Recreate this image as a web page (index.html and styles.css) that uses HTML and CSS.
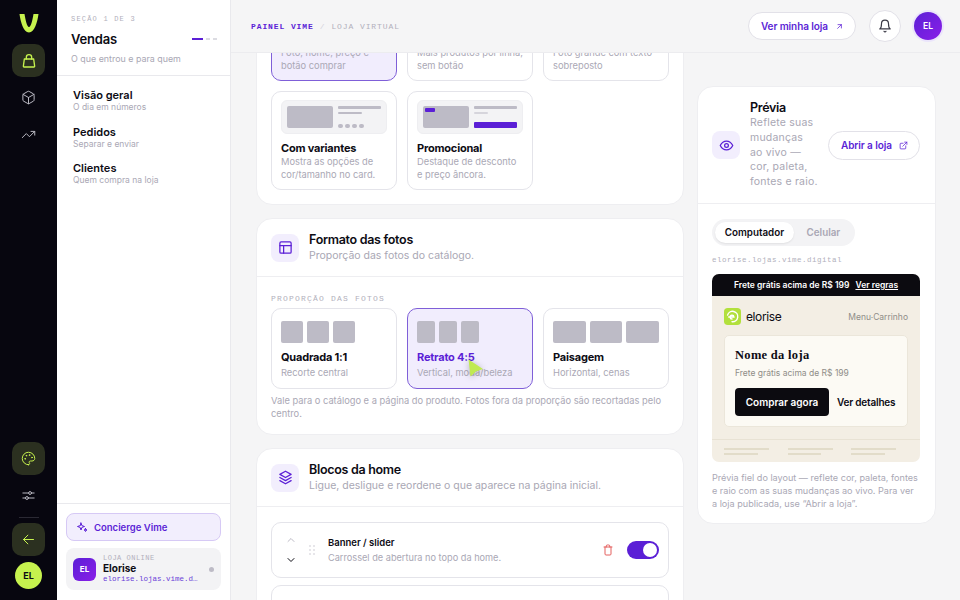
FILE: index.html
```html
<!DOCTYPE html>
<html lang="pt-BR">
<head>
    <meta charset="UTF-8">
    <title>Painel Vime - Loja virtual</title>
    <link rel="stylesheet" href="styles.css">
</head>
<body>
    <div class="app">
        <nav class="rail">
            <svg class="rail-logo" viewBox="0 0 20 19"><path d="M.5 0h5c1 6 2.500 13 4.500 13s3.500-7 4.500-13h5c-1 8-4 18.500-9.500 18.500S1.500 8 .5 0z"/></svg>
            <a class="rail-btn active"><svg class="icon bag" viewBox="0 0 24 24"><path d="M5 9h14l1.500 11a1 1 0 0 1-1 1h-15a1 1 0 0 1-1-1z"/><path d="M8 9V6.500a4 4 0 0 1 8 0V9"/></svg></a>
            <a class="rail-btn"><svg class="icon" viewBox="0 0 24 24"><path d="M21 8a2 2 0 0 0-1-1.730l-7-4a2 2 0 0 0-2 0l-7 4A2 2 0 0 0 3 8v8a2 2 0 0 0 1 1.730l7 4a2 2 0 0 0 2 0l7-4A2 2 0 0 0 21 16Z"/><path d="m3.300 7 8.700 5 8.700-5"/><path d="M12 22V12"/></svg></a>
            <a class="rail-btn"><svg class="icon" viewBox="0 0 24 24"><path d="M22 7l-8.500 8.500-5-5L2 17"/><path d="M16 7h6v6"/></svg></a>
            <div class="rail-space"></div>
            <a class="rail-btn active"><svg class="icon" viewBox="0 0 24 24"><path d="M12 22a10 10 0 1 1 10-10c0 2.500-2 4-4.500 4H15a2 2 0 0 0-1.500 3.300c.4.5.5 1 .2 1.600-.3.7-1 1.100-1.700 1.100z"/><circle cx="13.500" cy="6.500" r=".6"/><circle cx="17.500" cy="10.500" r=".6"/><circle cx="8.500" cy="7.500" r=".6"/><circle cx="6.500" cy="12.500" r=".6"/></svg></a>
            <a class="rail-btn"><svg class="icon" viewBox="0 0 24 24"><path d="M3 8h9M17 8h4M3 16h4M12 16h9"/><circle cx="14.500" cy="8" r="2.300"/><circle cx="9.500" cy="16" r="2.300"/></svg></a>
            <div class="rail-line"></div>
            <a class="rail-btn active"><svg class="icon" viewBox="0 0 24 24"><path d="M20 12H4"/><path d="M11 19l-7-7 7-7"/></svg></a>
            <div class="rail-avatar">EL</div>
        </nav>

        <aside class="side">
            <div class="side-head">
                <div class="mono-label">SEÇÃO 1 DE 3</div>
                <div class="side-title-row">
                    <h2>Vendas</h2>
                    <div class="steps"><span class="on"></span><span></span><span></span></div>
                </div>
                <p>O que entrou e para quem</p>
            </div>
            <ul class="side-menu">
                <li><b>Visão geral</b><small>O dia em números</small></li>
                <li><b>Pedidos</b><small>Separar e enviar</small></li>
                <li><b>Clientes</b><small>Quem compra na loja</small></li>
            </ul>
            <div class="side-foot">
                <button class="concierge">
                    <svg class="icon" viewBox="0 0 24 24"><path d="M10 4l1.800 5.200L17 11l-5.200 1.800L10 18l-1.800-5.200L3 11l5.200-1.800z"/><path d="M19 15l.8 2.200L22 18l-2.200.8L19 21l-.8-2.200L16 18l2.200-.8z"/></svg>
                    Concierge Vime
                </button>
                <div class="store">
                    <div class="store-logo">EL</div>
                    <div class="store-info">
                        <span class="store-kind">LOJA ONLINE</span>
                        <b>Elorise</b>
                        <span class="store-url">elorise.lojas.vime.digital</span>
                    </div>
                    <i class="store-dot"></i>
                </div>
            </div>
        </aside>

        <div class="main">
            <header class="topbar">
                <div class="crumb"><b>PAINEL VIME</b><span class="sep">/</span><span>LOJA VIRTUAL</span></div>
                <div class="top-actions">
                    <a class="pill-btn">Ver minha loja <svg class="icon" viewBox="0 0 24 24"><path d="M7 17 17 7"/><path d="M8 7h9v9"/></svg></a>
                    <a class="bell"><svg class="icon" viewBox="0 0 24 24"><path d="M6 8a6 6 0 0 1 12 0c0 7 3 9 3 9H3s3-2 3-9"/><path d="M10.300 21a1.940 1.940 0 0 0 3.400 0"/></svg></a>
                    <div class="top-avatar">EL</div>
                </div>
            </header>

            <div class="content">
                <div class="col-left">
                    <section class="card card-cut">
                        <div class="tiles">
                            <div class="tile selected"><p>Foto, nome, preço e botão comprar</p></div>
                            <div class="tile"><p>Mais produtos por linha, sem botão</p></div>
                            <div class="tile"><p>Foto grande com texto sobreposto</p></div>
                            <div class="tile">
                                <div class="mini">
                                    <div class="mini-photo"></div>
                                    <div class="mini-body">
                                        <i class="bar"></i><i class="bar short"></i>
                                        <div class="mini-dots"><i></i><i></i><i></i><i></i></div>
                                    </div>
                                </div>
                                <h4>Com variantes</h4>
                                <p>Mostra as opções de cor/tamanho no card.</p>
                            </div>
                            <div class="tile">
                                <div class="mini">
                                    <div class="mini-photo"><i class="mini-tag"></i></div>
                                    <div class="mini-body">
                                        <i class="bar"></i><i class="bar tiny"></i>
                                        <i class="mini-cta"></i>
                                    </div>
                                </div>
                                <h4>Promocional</h4>
                                <p>Destaque de desconto e preço âncora.</p>
                            </div>
                        </div>
                    </section>

                    <section class="card">
                        <div class="card-head">
                            <div class="head-icon"><svg class="icon" viewBox="0 0 24 24"><rect x="3" y="3" width="18" height="18" rx="2"/><path d="M3 9h18"/><path d="M9 21V9"/></svg></div>
                            <div class="head-text">
                                <h3>Formato das fotos</h3>
                                <p>Proporção das fotos do catálogo.</p>
                            </div>
                        </div>
                        <div class="card-body">
                            <div class="mono-label field-label">PROPORÇÃO DAS FOTOS</div>
                            <div class="tiles">
                                <div class="tile ratio">
                                    <div class="shots square"><i></i><i></i><i></i></div>
                                    <h4>Quadrada 1:1</h4>
                                    <p>Recorte central</p>
                                </div>
                                <div class="tile ratio selected">
                                    <div class="shots portrait"><i></i><i></i><i></i></div>
                                    <h4>Retrato 4:5</h4>
                                    <p>Vertical, moda/beleza</p>
                                    <svg class="cursor" viewBox="0 0 16 18"><path d="M.5.5 15 10l-7 2.500-5.500 5z"/></svg>
                                </div>
                                <div class="tile ratio">
                                    <div class="shots wide"><i></i><i></i><i></i></div>
                                    <h4>Paisagem</h4>
                                    <p>Horizontal, cenas</p>
                                </div>
                            </div>
                            <p class="note">Vale para o catálogo e a página do produto. Fotos fora da proporção são recortadas pelo centro.</p>
                        </div>
                    </section>

                    <section class="card">
                        <div class="card-head">
                            <div class="head-icon"><svg class="icon" viewBox="0 0 24 24"><path d="M12 2 3 7l9 5 9-5z"/><path d="M3 12l9 5 9-5"/><path d="M3 17l9 5 9-5"/></svg></div>
                            <div class="head-text">
                                <h3>Blocos da home</h3>
                                <p>Ligue, desligue e reordene o que aparece na página inicial.</p>
                            </div>
                        </div>
                        <div class="card-body blocks">
                            <div class="block">
                                <div class="arrows">
                                    <svg class="icon up" viewBox="0 0 24 24"><path d="M6 15l6-6 6 6"/></svg>
                                    <svg class="icon" viewBox="0 0 24 24"><path d="M6 9l6 6 6-6"/></svg>
                                </div>
                                <svg class="grip" viewBox="0 0 6 10"><circle cx="1" cy="1" r=".7"/><circle cx="5" cy="1" r=".7"/><circle cx="1" cy="5" r=".7"/><circle cx="5" cy="5" r=".7"/><circle cx="1" cy="9" r=".7"/><circle cx="5" cy="9" r=".7"/></svg>
                                <div class="block-text">
                                    <b>Banner / slider</b>
                                    <span>Carrossel de abertura no topo da home.</span>
                                </div>
                                <svg class="icon trash" viewBox="0 0 24 24"><path d="M4 6h16"/><path d="M18 6v14a2 2 0 0 1-2 2H8a2 2 0 0 1-2-2V6"/><path d="M8.500 6V4a2 2 0 0 1 2-2h3a2 2 0 0 1 2 2v2"/></svg>
                                <div class="toggle"><i></i></div>
                            </div>
                            <div class="block empty"></div>
                        </div>
                    </section>
                </div>

                <div class="col-right">
                    <section class="card preview-card">
                        <div class="preview-head">
                            <div class="head-icon"><svg class="icon" viewBox="0 0 24 24"><path d="M2 12s3.500-7 10-7 10 7 10 7-3.500 7-10 7-10-7-10-7Z"/><circle cx="12" cy="12" r="3"/></svg></div>
                            <div class="preview-text">
                                <h3>Prévia</h3>
                                <p>Reflete suas mudanças ao vivo — cor, paleta, fontes e raio.</p>
                            </div>
                            <a class="pill-btn open-btn">Abrir a loja <svg class="icon" viewBox="0 0 24 24"><path d="M15 3h6v6"/><path d="M10 14 21 3"/><path d="M18 13v6a2 2 0 0 1-2 2H5a2 2 0 0 1-2-2V8a2 2 0 0 1 2-2h6"/></svg></a>
                        </div>
                        <div class="preview-body">
                            <div class="tabs"><span class="tab on">Computador</span><span class="tab">Celular</span></div>
                            <div class="mono-label url">elorise.lojas.vime.digital</div>
                            <div class="shop">
                                <div class="shop-promo"><b>Frete grátis acima de R$ 199</b><u>Ver regras</u></div>
                                <div class="shop-main">
                                    <div class="shop-nav">
                                        <div class="shop-brand">
                                            <svg class="shop-logo" viewBox="0 0 18 18"><rect width="18" height="18" rx="4"/><path d="M5 9.500h5.500a2 2 0 1 0-2 2.200"/><path d="M3.800 7.500A5.500 5.500 0 1 1 8.500 14.500"/></svg>
                                            <span>elorise</span>
                                        </div>
                                        <span class="shop-links">Menu·Carrinho</span>
                                    </div>
                                    <div class="shop-hero">
                                        <h5>Nome da loja</h5>
                                        <p>Frete grátis acima de R$ 199</p>
                                        <div class="shop-actions">
                                            <a class="shop-buy">Comprar agora</a>
                                            <a class="shop-more">Ver detalhes</a>
                                        </div>
                                    </div>
                                </div>
                                <div class="shop-foot">
                                    <div><i></i><i></i></div>
                                    <div><i></i><i></i></div>
                                    <div><i></i><i></i></div>
                                </div>
                            </div>
                            <p class="note">Prévia fiel do layout — reflete cor, paleta, fontes e raio com as suas mudanças ao vivo. Para ver a loja publicada, use “Abrir a loja”.</p>
                        </div>
                    </section>
                </div>
            </div>
        </div>
    </div>
</body>
</html>
```

FILE: styles.css
```css
* {
    box-sizing: border-box;
}

body {
    margin: 0;
    font-family: Inter, "Noto Sans", sans-serif;
    color: #0d0c14;
    background: #f5f5f6;
}

h2, h3, h4, h5, p, ul {
    margin: 0;
    padding: 0;
}

.icon {
    width: 15px;
    height: 15px;
    fill: none;
    stroke: currentColor;
    stroke-width: 2;
    stroke-linecap: round;
    stroke-linejoin: round;
    flex-shrink: 0;
}

.app {
    display: flex;
    width: 960px;
    height: 600px;
    overflow: hidden;
}

.mono-label {
    font-family: "Liberation Mono", monospace;
    font-size: 8px;
    letter-spacing: 1.2px;
    color: #b2b0bc;
}

/* rail */
.rail {
    width: 57px;
    background: #07060f;
    display: flex;
    flex-direction: column;
    align-items: center;
    gap: 4px;
    padding: 14px 0 11px;
    flex-shrink: 0;
}

.rail-logo {
    width: 20px;
    height: 19px;
    margin-bottom: 7px;
    fill: #c6f24e;
}

.rail-btn {
    width: 33px;
    height: 33px;
    border-radius: 10px;
    display: flex;
    align-items: center;
    justify-content: center;
    color: #b9b8c2;
}

.rail-btn .icon {
    stroke-width: 1.600;
}

.rail-btn .bag {
    width: 16px;
    height: 16px;
    stroke-width: 2;
}

.rail-btn.active {
    background: #2b3020;
    color: #c6f24e;
}

.rail-space {
    flex: 1;
}

.rail-line {
    width: 20px;
    height: 1px;
    background: #2a2933;
    margin: 1px 0;
}

.rail-avatar {
    width: 27px;
    height: 27px;
    margin-top: 2px;
    border-radius: 50%;
    background: #c6f24e;
    font-size: 9px;
    font-weight: 700;
    display: flex;
    align-items: center;
    justify-content: center;
}

/* side panel */
.side {
    width: 174px;
    background: #fff;
    border-right: 1px solid #e9e9ed;
    display: flex;
    flex-direction: column;
    flex-shrink: 0;
}

.side-head {
    padding: 15px 13px 11px 14px;
    height: 76px;
    border-bottom: 1px solid #e9e9ed;
}

.side-head .mono-label {
    font-size: 7px;
    line-height: 9px;
}

.side-title-row {
    display: flex;
    align-items: center;
    justify-content: space-between;
    margin-top: 7px;
}

.side-title-row h2 {
    font-size: 13px;
    font-weight: 600;
    letter-spacing: -.2px;
    line-height: 16px;
}

.steps {
    display: flex;
    gap: 3px;
}

.steps span {
    width: 4px;
    height: 2px;
    background: #dcdce2;
}

.steps span.on {
    width: 11px;
    background: #5b1fd6;
}

.side-head p {
    margin-top: 6px;
    font-size: 8.900px;
    line-height: 11px;
    color: #a9a7b4;
}

.side-menu {
    list-style: none;
    padding: 13px 16px;
}

.side-menu li {
    height: 36.500px;
}

.side-menu b {
    display: block;
    font-size: 11px;
    font-weight: 600;
    line-height: 13px;
}

.side-menu small {
    display: block;
    font-size: 8.500px;
    line-height: 10px;
    color: #aaa8b5;
}

.side-foot {
    margin-top: auto;
    border-top: 1px solid #e9e9ed;
    padding: 9px 9px 10px;
    display: flex;
    flex-direction: column;
    gap: 7px;
}

.concierge {
    height: 28px;
    border: 1px solid #d6c9f5;
    border-radius: 8px;
    background: #f2eefd;
    color: #5b1fd6;
    font-family: inherit;
    font-size: 9.500px;
    font-weight: 600;
    display: flex;
    align-items: center;
    gap: 6px;
    padding: 0 9px;
}

.concierge .icon {
    width: 12px;
    height: 12px;
}

.store {
    height: 42px;
    border-radius: 8px;
    background: #f3f3f5;
    display: flex;
    align-items: center;
    padding: 0 7px;
    gap: 7px;
}

.store-logo {
    width: 23px;
    height: 23px;
    border-radius: 6px;
    background: linear-gradient(135deg, #5b1fd6, #8a1fe8);
    color: #fff;
    font-size: 8px;
    font-weight: 700;
    display: flex;
    align-items: center;
    justify-content: center;
    flex-shrink: 0;
}

.store-info {
    flex: 1;
    min-width: 0;
    display: flex;
    flex-direction: column;
}

.store-kind {
    font-family: "Liberation Mono", monospace;
    font-size: 7px;
    line-height: 8px;
    letter-spacing: .5px;
    color: #b2b0bc;
}

.store-info b {
    font-size: 10px;
    font-weight: 700;
    line-height: 12px;
}

.store-url {
    font-family: "Liberation Mono", monospace;
    font-size: 7.500px;
    line-height: 10px;
    color: #6a3fd8;
    white-space: nowrap;
    overflow: hidden;
    text-overflow: ellipsis;
}

.store-dot {
    width: 5px;
    height: 5px;
    border-radius: 50%;
    background: #bdbbc6;
    flex-shrink: 0;
}

/* top bar */
.main {
    flex: 1;
    min-width: 0;
    display: flex;
    flex-direction: column;
}

.topbar {
    height: 53px;
    flex-shrink: 0;
    background: #f5f5f6;
    border-bottom: 1px solid #ececef;
    display: flex;
    align-items: center;
    justify-content: space-between;
    padding: 0 18px 0 20px;
    position: relative;
    z-index: 2;
}

.crumb {
    font-family: "Liberation Mono", monospace;
    font-size: 8px;
    letter-spacing: .9px;
    color: #b2b0bc;
    display: flex;
    gap: 6px;
}

.crumb b {
    color: #5b1fd6;
}

.crumb .sep {
    color: #d4d3da;
}

.top-actions {
    display: flex;
    align-items: center;
    gap: 13px;
}

.pill-btn {
    height: 28px;
    padding: 0 13px;
    border: 1px solid #e2e1e8;
    border-radius: 15px;
    background: #fff;
    color: #5b1fd6;
    font-size: 10px;
    font-weight: 600;
    letter-spacing: -.1px;
    display: flex;
    align-items: center;
    gap: 7px;
    white-space: nowrap;
}

.pill-btn .icon {
    width: 9px;
    height: 9px;
}

.top-actions .pill-btn {
    width: 108px;
    padding: 0 13px 0 12px;
    justify-content: space-between;
}

.bell {
    width: 32px;
    height: 32px;
    border: 1px solid #e2e1e8;
    border-radius: 50%;
    background: #fff;
    color: #3a3945;
    display: flex;
    align-items: center;
    justify-content: center;
}

.bell .icon {
    width: 14px;
    height: 14px;
}

.top-avatar {
    width: 28px;
    height: 28px;
    border-radius: 50%;
    background: linear-gradient(135deg, #5b1fd6, #8a1fe8);
    box-shadow: 0 0 0 2px #ebe5fb;
    color: #fff;
    font-size: 8.500px;
    font-weight: 600;
    display: flex;
    align-items: center;
    justify-content: center;
}

/* content */
.content {
    flex: 1;
    min-height: 0;
    overflow: hidden;
    display: flex;
    gap: 13px;
    padding-left: 25px;
}

.col-left {
    width: 428px;
    flex-shrink: 0;
    display: flex;
    flex-direction: column;
    gap: 13px;
}

.col-right {
    width: 239px;
    flex-shrink: 0;
    padding-top: 33px;
}

.card {
    background: #fff;
    border: 1px solid #eeeef1;
    border-radius: 16px;
    flex-shrink: 0;
}

.card-cut {
    margin-top: -32px;
    padding: 15px 14px 14px;
}

.card-head {
    height: 58px;
    border-bottom: 1px solid #eeeef1;
    display: flex;
    align-items: center;
    gap: 10px;
    padding: 0 14px;
}

.head-icon {
    width: 28px;
    height: 28px;
    border-radius: 8px;
    background: #f2eefd;
    color: #5b1fd6;
    display: flex;
    align-items: center;
    justify-content: center;
    flex-shrink: 0;
}

.head-text h3, .preview-text h3 {
    font-size: 12.500px;
    font-weight: 600;
    letter-spacing: -.3px;
    line-height: 16px;
}

.head-text p {
    font-size: 10.500px;
    line-height: 15px;
    color: #a9a7b4;
}

.card-body {
    padding: 17px 14px 14px;
}

.field-label {
    line-height: 10px;
    margin-bottom: 4px;
}

.tiles {
    display: grid;
    grid-template-columns: repeat(3, 1fr);
    gap: 10px;
}

.tile {
    border: 1px solid #e4e4ea;
    border-radius: 10px;
    background: #fff;
    padding: 8px 9px;
    position: relative;
}

.tile.selected {
    background: #f1edfd;
    border-color: #7f5fd8;
}

.tile h4 {
    font-size: 11px;
    font-weight: 700;
    letter-spacing: -.2px;
    line-height: 14px;
    margin-top: 7px;
}

.tile p {
    font-size: 9.300px;
    line-height: 13px;
    color: #aaa8b5;
}

.mini {
    height: 34px;
    border: 1px solid #eeeef1;
    border-radius: 6px;
    background: #f3f3f5;
    padding: 5px;
    display: flex;
    gap: 5px;
}

.mini-photo {
    width: 46px;
    background: #bdbbc6;
    border-radius: 2px;
    padding: 2px;
}

.mini-tag {
    display: block;
    width: 10px;
    height: 4px;
    border-radius: 1px;
    background: #5b1fd6;
}

.mini-body {
    flex: 1;
    display: flex;
    flex-direction: column;
    gap: 3px;
}

.bar {
    display: block;
    height: 2.500px;
    background: #bdbbc6;
    border-radius: 1px;
}

.bar.short {
    width: 56%;
}

.bar.tiny {
    width: 32%;
    background: #d6d5dc;
}

.mini-dots {
    display: flex;
    gap: 2.500px;
    margin-top: auto;
}

.mini-dots i {
    width: 4.500px;
    height: 4.500px;
    border-radius: 50%;
    background: #bdbbc6;
}

.mini-cta {
    display: block;
    height: 6px;
    border-radius: 1px;
    background: #5b1fd6;
    margin-top: auto;
}

/* photo ratio tiles */
.ratio {
    height: 81px;
    padding-top: 12px;
}

.ratio h4 {
    margin-top: 7px;
}

.ratio p {
    margin-top: 2px;
}

.shots {
    display: flex;
    gap: 4px;
}

.shots i {
    height: 22px;
    border-radius: 2px;
    background: #bdbbc6;
}

.square i {
    width: 22px;
}

.portrait i {
    width: 18px;
}

.wide i {
    flex: 1;
}

.selected h4 {
    color: #5b1fd6;
}

.cursor {
    position: absolute;
    left: 60px;
    top: 50px;
    width: 16px;
    height: 18px;
    fill: #c0ea52;
    filter: drop-shadow(0 1px 3px rgba(0, 0, 0, .25));
}

.note {
    margin-top: 6px;
    font-size: 9.300px;
    line-height: 12.500px;
    color: #aaa8b5;
}

/* home blocks */
.blocks {
    padding-top: 15px;
    display: flex;
    flex-direction: column;
    gap: 7px;
}

.block {
    height: 56px;
    border: 1px solid #e4e4ea;
    border-radius: 10px;
    display: flex;
    align-items: center;
    padding: 0 9px 0 11px;
    flex-shrink: 0;
}

.block.empty {
    height: 40px;
}

.arrows {
    display: flex;
    flex-direction: column;
    gap: 8px;
    margin-right: 12px;
}

.arrows .up {
    color: #bdbbc6;
}

.arrows .icon {
    width: 12px;
    height: 12px;
    margin-left: 2px;
}

.grip {
    width: 6px;
    height: 10px;
    fill: #bdbbc6;
    margin-right: 13px;
}

.block-text {
    flex: 1;
    display: flex;
    flex-direction: column;
    gap: 3px;
}

.block-text b {
    font-size: 9.500px;
    font-weight: 600;
    line-height: 12px;
}

.block-text span {
    font-size: 9.200px;
    line-height: 12px;
    color: #aaa8b5;
}

.trash {
    width: 12px;
    height: 12px;
    color: #e4605f;
    margin-right: 13px;
}

.toggle {
    width: 32px;
    height: 18px;
    border-radius: 9px;
    background: #5b1fd6;
    display: flex;
    justify-content: flex-end;
    padding: 2px;
}

.toggle i {
    width: 14px;
    height: 14px;
    border-radius: 50%;
    background: #fff;
}

/* preview */
.preview-card {
    height: 438px;
}

.preview-head {
    height: 117px;
    border-bottom: 1px solid #eeeef1;
    display: flex;
    align-items: center;
    gap: 10px;
    padding: 0 15px 0 14px;
}

.preview-text {
    flex: 1;
}

.preview-text p {
    font-size: 10.500px;
    line-height: 14.700px;
    color: #a9a7b4;
    letter-spacing: .2px;
}

.open-btn {
    width: 92px;
    height: 29px;
    padding: 0 12px;
    justify-content: space-between;
    flex-shrink: 0;
}

.preview-body {
    padding: 15px 15px 15px 14px;
}

.tabs {
    width: 143px;
    height: 27px;
    background: #f3f3f5;
    border-radius: 14px;
    display: flex;
    padding: 3px;
    align-items: center;
}

.tab {
    width: 80px;
    height: 21px;
    border-radius: 11px;
    font-size: 9.800px;
    font-weight: 600;
    color: #a9a7b4;
    display: flex;
    align-items: center;
    justify-content: center;
}

.tab + .tab {
    width: 58px;
    margin-left: 1px;
}

.tab.on {
    background: #fff;
    color: #0d0c14;
    box-shadow: 0 1px 2px rgba(0, 0, 0, .08);
}

.url {
    font-size: 7.500px;
    letter-spacing: .5px;
    line-height: 10px;
    margin: 9px 0 9px;
}

.shop {
    height: 188px;
    border-radius: 7px;
    background: #f3eee4;
    overflow: hidden;
    display: flex;
    flex-direction: column;
}

.shop-promo {
    height: 22px;
    background: #0c0b10;
    color: #fff;
    font-size: 8.500px;
    display: flex;
    align-items: center;
    justify-content: center;
    gap: 6px;
    flex-shrink: 0;
}

.shop-promo b {
    font-weight: 600;
}

.shop-promo u {
    font-weight: 600;
}

.shop-main {
    flex: 1;
    padding: 12px 12px 0 12px;
}

.shop-nav {
    display: flex;
    align-items: center;
    justify-content: space-between;
    height: 17px;
    margin-bottom: 10px;
}

.shop-brand {
    display: flex;
    align-items: center;
    gap: 5px;
    font-size: 12px;
    letter-spacing: -.4px;
}

.shop-logo {
    width: 17px;
    height: 17px;
    fill: none;
    stroke: #fff;
    stroke-width: 1.500;
    stroke-linecap: round;
}

.shop-logo rect {
    fill: #b2e03c;
    stroke: none;
}

.shop-links {
    font-size: 8.500px;
    color: #8f8d88;
}

.shop-hero {
    height: 92px;
    background: #fcfaf4;
    border: 1px solid #ebe6da;
    border-radius: 5px;
    padding: 12px 0 12px 10px;
}

.shop-hero h5 {
    font-family: "Liberation Serif", serif;
    font-size: 12.500px;
    font-weight: 700;
    letter-spacing: .3px;
    line-height: 15px;
}

.shop-hero p {
    font-size: 8.500px;
    line-height: 11px;
    color: #8f8d88;
    margin-top: 5px;
}

.shop-actions {
    display: flex;
    align-items: center;
    gap: 8px;
    margin-top: 9px;
}

.shop-buy {
    width: 94px;
    height: 28px;
    border-radius: 4px;
    background: #0c0b10;
    color: #fff;
    font-size: 10px;
    font-weight: 600;
    display: flex;
    align-items: center;
    justify-content: center;
}

.shop-more {
    font-size: 10px;
    font-weight: 600;
    letter-spacing: -.2px;
    white-space: nowrap;
}

.shop-foot {
    height: 23px;
    border-top: 1px solid #e8e2d4;
    display: flex;
    justify-content: space-between;
    padding: 8px 24px 0 12px;
    flex-shrink: 0;
}

.shop-foot div {
    width: 45px;
}

.shop-foot i {
    display: block;
    height: 2px;
    background: #e2dcc9;
    margin-bottom: 2.500px;
}

.shop-foot i + i {
    width: 75%;
}

.preview-body .note {
    margin-top: 9px;
    font-size: 9.100px;
    line-height: 13px;
}
```
